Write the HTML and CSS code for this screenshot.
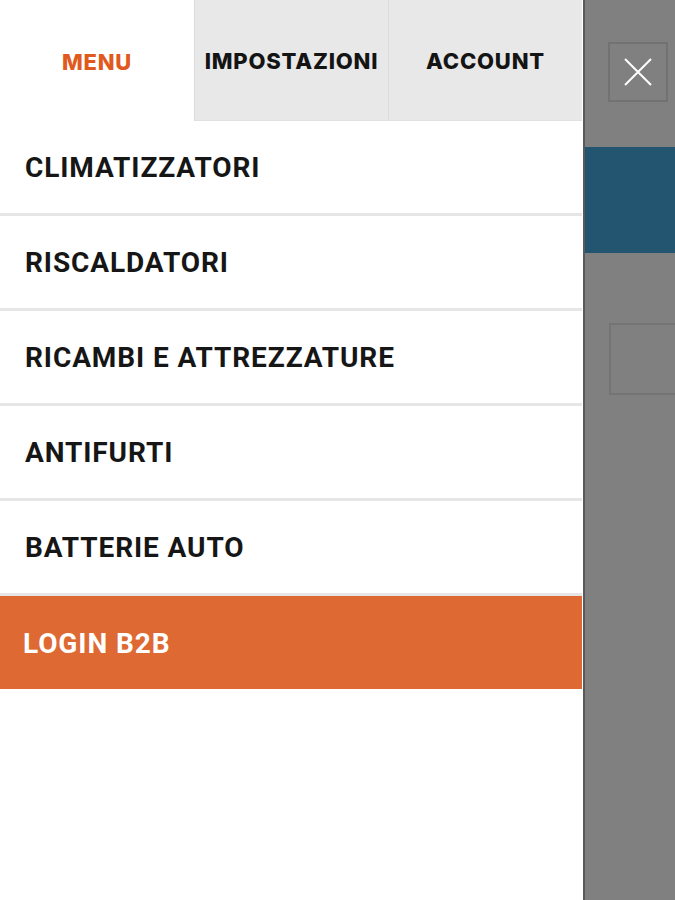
FILE: index.html
```html
<!DOCTYPE html>
<html lang="it">
<head>
<meta charset="utf-8">
<title>Menu</title>
<link rel="stylesheet" href="styles.css">
</head>
<body>
<div class="screen">
  <aside class="panel">
    <nav class="tabs">
      <div class="tab tab-active">MENU</div>
      <div class="tab">IMPOSTAZIONI</div>
      <div class="tab">ACCOUNT</div>
    </nav>
    <ul class="menu">
      <li class="item">CLIMATIZZATORI</li>
      <li class="item">RISCALDATORI</li>
      <li class="item">RICAMBI E ATTREZZATURE</li>
      <li class="item">ANTIFURTI</li>
      <li class="item">BATTERIE AUTO</li>
      <li class="item item-login">LOGIN B2B</li>
    </ul>
  </aside>
  <div class="overlay">
    <div class="close-row">
      <button class="close" aria-label="Chiudi">
        <svg width="28" height="28" viewBox="0 0 28 28"><path d="M1 1 L27 27 M27 1 L1 27" stroke="#fff" stroke-width="2" fill="none"/></svg>
      </button>
    </div>
    <div class="band"></div>
    <div class="ghost-box"></div>
  </div>
</div>
</body>
</html>
```
FILE: styles.css
```css
* { box-sizing: border-box; }
html, body { margin: 0; padding: 0; height: 100%; }
body { font-family: "Inter", "Roboto", sans-serif; background: #808080; }
.screen { display: flex; height: 900px; width: 675px; overflow: hidden; }
.panel { width: 585px; flex: none; background: #fff; border-right: 2px solid #5a5a5a; }
.tabs { display: flex; height: 121px; }
.tab {
  width: 194px; flex: none; display: flex; align-items: center; justify-content: center;
  background: #e8e8e8; font-weight: 800; font-size: 22px; color: #141414; letter-spacing: 0.8px;
  border-left: 1px solid #dcdcdc; border-bottom: 1px solid #e0e0e0; padding-top: 2px;
}
.tab:last-child { width: 194px; }
.tab-active { background: #fff; color: #e05a1e; border-left: none; border-bottom: none; }
.menu { list-style: none; margin: 0; padding: 0; width: 582px; }
.item {
  height: 95px; display: flex; align-items: center; padding-left: 25px;
  font-family: "Roboto", sans-serif; font-weight: 700; font-size: 28px; color: #161616;
  letter-spacing: 0.9px;
  border-bottom: 3px solid #e6e6e6; padding-top: 1px;
}
.item-login { background: #de6932; color: #fff; border-bottom: none; height: 93px; padding-left: 23px; }
.overlay { flex: 1; display: flex; flex-direction: column; }
.close-row { height: 147px; padding: 42px 0 0 23px; }
.close {
  width: 60px; height: 60px; background: transparent; border: 2px solid #727272;
  display: flex; align-items: center; justify-content: center; padding: 0;
}
.band { height: 106px; background: #245570; }
.ghost-box { margin: 70px 0 0 24px; height: 72px; border: 2px solid #747474; border-right: none; }
```
